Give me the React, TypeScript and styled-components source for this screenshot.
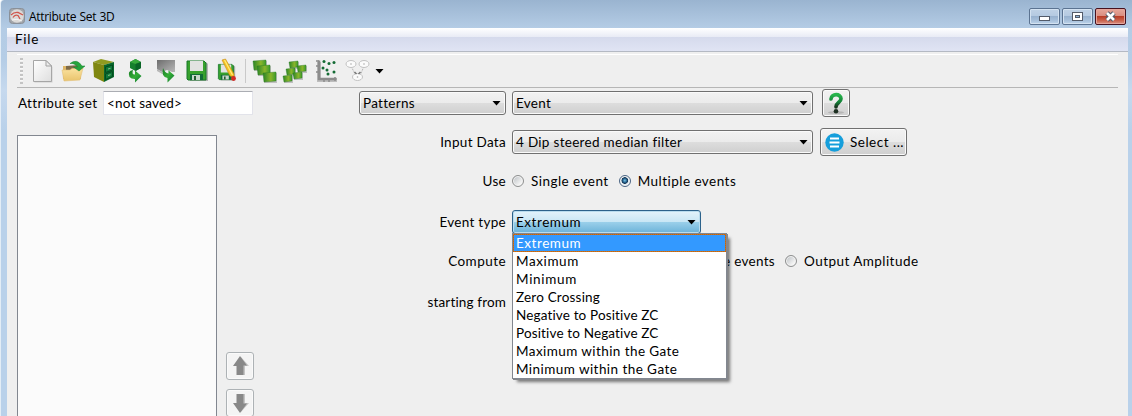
import React from "react";
import styled, { createGlobalStyle, css } from "styled-components";

const GlobalStyle = createGlobalStyle`
  * { box-sizing: border-box; }
  body { margin: 0; overflow: hidden; }
`;

const Window = styled.div`
  width: 1132px;
  height: 416px;
  display: flex;
  flex-direction: column;
  overflow: hidden;
  background: linear-gradient(#9ab4d0 0, #b4cce5 28px, #b5cde6 60px, #c6d9ee 90px, #b9d1ea 130px);
  border-left: 1px solid #e3edf6;
  border-top-left-radius: 4px;
  font-family: Lato, "Liberation Sans", sans-serif;
  font-size: 13.5px;
  color: #000;
`;

const TitleBar = styled.header`
  height: 28px;
  flex: none;
  display: flex;
  align-items: flex-start;
  padding: 8px 6px 0 8px;
`;

const Title = styled.h1`
  margin: 0 auto 0 4px;
  font: 400 12px/17px "Open Sans", "Noto Sans", sans-serif;
  letter-spacing: -0.3px;
  word-spacing: 0.5px;
`;

const Caption = styled.button<{ $close?: boolean }>`
  width: 31px;
  height: 17px;
  margin-left: 2px;
  padding: 0;
  display: flex;
  align-items: center;
  justify-content: center;
  border: 1px solid ${(p) => (p.$close ? "#47121f" : "#5b7391")};
  border-radius: 2px;
  box-shadow: inset 0 0 0 1px ${(p) => (p.$close ? "#e5a59b" : "#d3e2f1")};
  background: ${(p) =>
    p.$close
      ? "linear-gradient(#e6a79b 0, #da8e80 45%, #b93d27 50%, #c9604a 75%, #d99282 100%)"
      : "linear-gradient(#c0d2e6 0, #b5cae1 45%, #98b2cf 50%, #a6bfda 75%, #bfd5eb 100%)"};
`;

const Client = styled.main`
  flex: 1;
  width: 1121px;
  margin-left: 6px;
  background: #efefef;
`;

const MenuBar = styled.nav`
  height: 24px;
  padding: 0 0 0 8px;
  border-bottom: 1px solid #b4b9c3;
  background: linear-gradient(#fff 0, #e8ebf5 9px, #d5daec 9px, #e0e4f4 23px);
  line-height: 23px;
  letter-spacing: 0.75px;
`;

const ToolBar = styled.div`
  height: 34px;
  margin: 2px 10px 0;
  padding-left: 3px;
  display: flex;
  align-items: center;
  border-top: 1px solid #fff;
  border-bottom: 1px solid #b6b6b6;
`;

const Grip = styled.span`
  width: 3px;
  height: 26px;
  margin-right: 7px;
  background: repeating-linear-gradient(#c4c4c4 0 2px, #f8f8f8 2px 3px, #efefef 3px 4px);
`;

const Tool = styled.span<{ $width?: number }>`
  width: ${(p) => p.$width ?? 30.7}px;
  height: 26px;
  flex: none;
  svg { display: block; }
`;

const Separator = styled.span`
  width: 1px;
  height: 24px;
  margin: 0 3px 0 0;
  background: #c9c9c9;
`;

const Content = styled.div`
  display: flex;
  padding: 1px 10px 0;
  height: 328px;
`;

const SidePanel = styled.section`
  width: 342px;
  flex: none;
`;

const NameRow = styled.label`
  height: 28px;
  display: flex;
  align-items: center;
`;

const NameInput = styled.span`
  width: 150px;
  height: 24px;
  margin-left: auto;
  padding-left: 3px;
  border: 1px solid #e2e3ea;
  border-top-color: #abadb3;
  background: #fff;
  line-height: 22px;
  border-radius: 1px;
`;

const NameGroup = styled.span`
  width: 236px;
  padding-left: 1px;
  display: flex;
  align-items: center;
`;

const ListArea = styled.div`
  display: flex;
  margin-top: 18px;
`;

const ListBox = styled.div`
  width: 200px;
  height: 300px;
  border: 1px solid #828790;
  background: #fbfbfb;
`;

const MoveButtons = styled.div`
  margin: 217px 0 0 9px;
  display: flex;
  flex-direction: column;
  gap: 9px;
`;

const buttonFace = css`
  border: 1px solid #707070;
  border-radius: 3px;
  box-shadow: inset 0 0 0 1px #fafafa;
  background: linear-gradient(#f2f2f2 0, #ebebeb 50%, #dddddd 50%, #cfcfcf 100%);
`;

const PushButton = styled.button<{ $width?: number; $disabled?: boolean }>`
  ${buttonFace}
  width: ${(p) => p.$width ?? 28}px;
  height: 28px;
  padding: 0 0 0 4px;
  display: flex;
  align-items: center;
  gap: 6px;
  font: inherit;
  letter-spacing: 0.5px;
  white-space: nowrap;
  color: #000;
  ${(p) => p.$disabled && css`border-color: #adb2b5; background: #f4f4f4;`}
  svg { flex: none; }
`;

const Form = styled.section`
  display: flex;
  flex-direction: column;
`;

const Row = styled.div<{ $gap?: number }>`
  height: 28px;
  margin-bottom: ${(p) => p.$gap ?? 11}px;
  display: flex;
  align-items: center;
`;

const Label = styled.span<{ $spacing?: number }>`
  width: 147px;
  margin-right: 6px;
  text-align: right;
  letter-spacing: ${(p) => p.$spacing ?? 0.3}px;
`;

const Text = styled.span<{ $spacing?: number }>`
  white-space: nowrap;
  letter-spacing: ${(p) => p.$spacing ?? 0.3}px;
`;

const Combo = styled.div<{ $width: number; $open?: boolean; $after?: number }>`
  ${buttonFace}
  position: relative;
  width: ${(p) => p.$width}px;
  height: 24px;
  margin-right: ${(p) => p.$after ?? 0}px;
  padding: 0 4px 0 3px;
  display: flex;
  align-items: center;
  justify-content: space-between;
  ${(p) =>
    p.$open &&
    css`
      border-color: #2c628b;
      box-shadow: inset 0 0 0 1px #b9dcee;
      background: linear-gradient(#e3f3fb 0, #c8e6f5 50%, #9bd0ea 50%, #6bb2d9 100%);
    `}
`;

const Menu = styled.ul`
  position: absolute;
  z-index: 2;
  left: -1px;
  top: 22px;
  width: 215px;
  height: 146px;
  margin: 0;
  padding: 0;
  list-style: none;
  border: 1px solid #828790;
  background: #fff;
  box-shadow: 1px 1px 0 #85878c, 4px 4px 3px -1px rgba(0, 0, 0, 0.5);
`;

const Option = styled.li<{ $selected?: boolean }>`
  height: 18px;
  padding-left: 3px;
  line-height: 18px;
  ${(p) =>
    p.$selected &&
    css`
      padding-left: 2px;
      line-height: 16px;
      color: #fff;
      border: 1px solid transparent;
      background:
        linear-gradient(#3399ff, #3399ff) padding-box,
        repeating-conic-gradient(#cc6600 0 25%, #b5723a 0 50%) 0 0 / 2px 2px border-box;
    `}
`;

const Radio = styled.span<{ $checked?: boolean }>`
  width: 12px;
  height: 12px;
  margin-right: 7px;
  flex: none;
  border-radius: 50%;
  border: 1px solid ${(p) => (p.$checked ? "#4b6584" : "#8e8f8f")};
  box-shadow: inset 0 0 0 1px #f4f4f4;
  background: ${(p) =>
    p.$checked
      ? "radial-gradient(circle at 48% 45%, #77c5e8 0, #174d78 2.4px, #17334f 3px, #d8e4eb 3.6px, #f3f6f8 5px)"
      : "linear-gradient(135deg, #b9bec2, #f4f4f4 75%)"};
`;

const Choice = styled.label<{ $after?: number; $width?: number }>`
  display: flex;
  align-items: center;
  justify-content: flex-end;
  width: ${(p) => (p.$width ? `${p.$width}px` : "auto")};
  margin-right: ${(p) => p.$after ?? 0}px;
`;

const DropArrow = () => (
  <svg width="9" height="5" viewBox="0 0 9 5"><path d="M0.5 0H8.5L4.5 4.5Z" fill="#000" /></svg>
);

const Gradients = () => (
  <svg width="0" height="0" display="block">
    <defs>
      <linearGradient id="leaf" x1="0" y1="0" x2="1" y2="1"><stop stopColor="#187c25" /><stop offset=".5" stopColor="#35ad36" /><stop offset="1" stopColor="#0d7533" /></linearGradient>
      <linearGradient id="tile" x1="0" y1="0" x2="1" y2="0"><stop stopColor="#2a8526" /><stop offset=".6" stopColor="#8ab52a" /><stop offset="1" stopColor="#3c9a2b" /></linearGradient>
      <linearGradient id="grey" x1="0" y1="0" x2="1" y2="1"><stop stopColor="#6d6d6d" /><stop offset="1" stopColor="#b8b8b8" /></linearGradient>
      <linearGradient id="paper" x1="0" y1="0" x2="1" y2="1"><stop stopColor="#fff" /><stop offset="1" stopColor="#dedede" /></linearGradient>
      <linearGradient id="folder" x1="0" y1="0" x2="0" y2="1"><stop stopColor="#fbe3a0" /><stop offset="1" stopColor="#e9c36c" /></linearGradient>
      <linearGradient id="help" x1="0" y1="0" x2="0" y2="1"><stop stopColor="#27b44b" /><stop offset=".6" stopColor="#128238" /><stop offset="1" stopColor="#17351f" /></linearGradient>
    </defs>
  </svg>
);

const Icon = ({ children, width = 26 }: { children: React.ReactNode; width?: number }) => (
  <svg width={width} height="26" viewBox={`0 0 ${width} 26`}>{children}</svg>
);

const AppLogo = () => (
  <svg width="16" height="16" viewBox="0 0 16 16">
    <rect x=".5" y=".5" width="15" height="15" rx="3" fill="#a3a6aa" stroke="#8a9098" />
    <circle cx="8" cy="8" r="6.800" fill="#dcdad8" />
    <path d="M2 7Q5 4 9 4.500L14 7M4 9.500Q6 6 9 7.500L11 11" fill="none" stroke="#d0564c" strokeWidth="1.300" />
    <path d="M3 12Q8 10 13 13" stroke="#f4f4f4" fill="none" />
  </svg>
);

const NewIcon = () => (
  <Icon>
    <path d="M4.500 3.500H17L22.500 9V24.500H4.500Z" fill="#aaa" opacity=".45" />
    <path d="M3.500 2.500H16L21.500 8V23.500H3.500Z" fill="url(#paper)" stroke="#a6a6a6" />
    <path d="M16 2.500V8H21.500Z" fill="#ececec" stroke="#a1a1a1" />
  </Icon>
);
const OpenIcon = () => (
  <Icon>
    <path d="M2 8H8L10 10H20V21H2Z" fill="#dcb566" />
    <path d="M5 8L18 7V13H5Z" fill="#7d6a48" />
    <path d="M1 12H9L11 10.500L22 10L19 22L3 23Z" fill="url(#folder)" stroke="#e3c17a" strokeWidth=".6" />
    <path d="M9 5.500Q16 0 21 8H24L18 13L12.500 9H16.500Q14 5 9 5.500Z" fill="#26a43d" stroke="#16812c" strokeWidth=".5" />
  </Icon>
);
const CabinetIcon = () => (
  <Icon>
    <path d="M2 4L10 1L23 4L13 7Z" fill="#909b20" />
    <path d="M2 4L13 7V24L3 19Z" fill="#7f8710" />
    <path d="M13 7L23 4V19L13 24Z" fill="#08672c" />
    <path d="M14.500 9L21.500 7V12L14.500 14.500ZM14.500 16L21.500 13.500V18.500L14.500 21.500Z" fill="#0d7939" stroke="#044b1f" />
    <path d="M17 11L19.500 10.300M17 17.500L19.500 16.700" stroke="#8fbd88" />
  </Icon>
);
const ImportCubeIcon = () => (
  <Icon>
    <path d="M8 4L13.500 1L19 4V10L13.500 13L8 10Z" fill="#16802d" />
    <path d="M8 4L13.500 6L19 4L13.500 1Z" fill="#37a83b" />
    <path d="M13.500 6V13L19 10V4Z" fill="#0a6426" />
    <path d="M11 12Q5 13 7.500 19Q9 21 13 21V24.500L19.500 18L13 12.500V16.500Q9.500 17 11 12Z" fill="url(#leaf)" />
  </Icon>
);
const ImportHorizonIcon = () => (
  <Icon>
    <path d="M4 2H22V14H19L14 12L9 14L4 11Z" fill="url(#grey)" />
    <path d="M4 11L9 14L11 17L4 13Z" fill="#b6b6b6" />
    <path d="M10 10Q8 19 14.500 20V24.500L21.500 17.500L15.500 12.500V15.500Q12 15 10 10Z" fill="url(#leaf)" />
  </Icon>
);
const Disk = () => (
  <>
    <path d="M4 4H22L24 6V23H6Z" fill="#777" opacity=".5" />
    <path d="M3 3H20L22 5V22H4L3 21Z" fill="#37a12d" stroke="#18782b" />
    <path d="M6 3H19V13H6Z" fill="#e1e3e1" />
    <path d="M6 16H19V22H6Z" fill="#116b37" />
    <path d="M8 17H16V22H8Z" fill="#c7d6cb" />
    <path d="M10 18H12V22H10Z" fill="#245b32" />
  </>
);
const SaveIcon = () => <Icon><g transform="translate(1 0)"><Disk /></g></Icon>;
const SaveAsIcon = () => (
  <Icon>
    <g transform="translate(2 4) scale(.8)"><Disk /></g>
    <path d="M8 2L11.500 1L20 16V19L16 18Z" fill="#f4c225" stroke="#c78810" strokeWidth=".6" />
    <path d="M10.500 2L18.500 17" stroke="#ffed79" strokeWidth="1.200" />
    <circle cx="19.500" cy="20.500" r="2.400" fill="#d52b27" />
  </Icon>
);
const TileIcon = ({ spots, size }: { spots: number[][]; size: number[] }) => (
  <Icon width={28}>
    {spots.map(([x, y], i) => (
      <g key={i}>
        <rect x={x + 1} y={y + 1} width={size[0]} height={size[1]} fill="#888" opacity=".45" />
        <path d={`M${x} ${y + 1}L${x + size[0]} ${y}V${y + size[1] - 1}L${x + 1} ${y + size[1]}Z`} fill="url(#tile)" stroke="#28781f" strokeWidth=".4" />
      </g>
    ))}
  </Icon>
);
const CrossPlotIcon = () => (
  <Icon>
    <path d="M5 4V22H23" fill="none" stroke="#bdbdbd" strokeWidth="4" />
    <path d="M5 2.500V21H22.500" fill="none" stroke="#8c8c8c" strokeWidth="2.500" />
    <path d="M2 3H5M2 8H4M2 14H4M10 22V24M15 22V24M21 19V23" fill="none" stroke="#8c8c8c" strokeWidth="1.500" />
    {[[10, 3.500], [15, 5.500], [20, 4.500], [9, 10], [13, 12], [14, 16], [20, 14]].map(([x, y]) => (
      <circle key={`${x}-${y}`} cx={x} cy={y} r="1.500" fill="#146b34" />
    ))}
  </Icon>
);
const NetworkIcon = () => (
  <Icon>
    <path d="M6 8L11 18M19 8L15 18" stroke="#b5b5b5" strokeDasharray="2 1" />
    {[[6, 6], [19, 6], [12.5, 19]].map(([x, y]) => (
      <g key={x}>
        <ellipse cx={x} cy={y} rx="5" ry="3.500" fill="#fbfbfb" stroke="#c2c2c2" />
        <circle cx={x} cy={y} r=".8" fill="#aaa" />
      </g>
    ))}
    <path d="M9.500 14L11.500 16M15.500 14L13.500 16" stroke="#777" strokeWidth="1.500" />
  </Icon>
);
const HelpIcon = () => (
  <svg width="20" height="24" viewBox="0 0 20 24">
    <ellipse cx="9" cy="21.500" rx="8" ry="1.300" fill="#b5b5b5" />
    <path d="M4 8C4.300 2.300 14 2.300 14 7.700C14 11.300 9 11.800 9 15.800" fill="none" stroke="url(#help)" strokeWidth="3.700" strokeLinecap="round" />
    <circle cx="9" cy="20.300" r="2.300" fill="#1e3022" />
  </svg>
);
const SelectIcon = () => (
  <svg width="19" height="19" viewBox="0 0 19 19">
    <circle cx="9.500" cy="9.500" r="9.200" fill="#159edb" />
    <path d="M5 5.500H14M4.500 9.500H14.500M5 13.500H14" stroke="#fff" strokeWidth="2" />
  </svg>
);
const MoveIcon = ({ down }: { down?: boolean }) => (
  <svg width="18" height="20" viewBox="0 0 18 20">
    <g transform={down ? "matrix(1 0 0 -1 0 20)" : undefined}>
      <path d="M10 1L18 10H14V19H7V10H4Z" fill="#c4c4c4" />
      <path d="M9 0L16 9.500H12.500V19H5.500V10H2Z" fill="#888" />
    </g>
  </svg>
);

const options: [string, number][] = [
  ["Extremum", 0.55],
  ["Maximum", 0.6],
  ["Minimum", 0.7],
  ["Zero Crossing", 0.2],
  ["Negative to Positive ZC", 0.15],
  ["Positive to Negative ZC", 0.15],
  ["Maximum within the Gate", 0.42],
  ["Minimum within the Gate", 0.44],
];

export default function App() {
  return (
    <Window>
      <GlobalStyle />
      <TitleBar>
        <AppLogo />
        <Title>Attribute Set 3D</Title>
        <Caption aria-label="Minimize">
          <svg width="11" height="11"><rect x=".5" y="5.500" width="10" height="4" fill="#fff" stroke="#535b69" /></svg>
        </Caption>
        <Caption aria-label="Maximize">
          <svg width="11" height="9"><rect x=".5" y=".5" width="10" height="8" fill="#fff" stroke="#535b69" /><rect x="3.500" y="3.500" width="4" height="2" fill="#8eb3d8" stroke="#535b69" /></svg>
        </Caption>
        <Caption $close aria-label="Close">
          <svg width="13" height="11"><path d="M3 2L10 9M10 2L3 9" stroke="#535b69" strokeWidth="4.600" /><path d="M3 2L10 9M10 2L3 9" stroke="#fff" strokeWidth="2.600" /></svg>
        </Caption>
      </TitleBar>
      <Client>
        <MenuBar>File</MenuBar>
        <ToolBar>
          <Gradients />
          <Grip />
          <Tool><NewIcon /></Tool>
          <Tool><OpenIcon /></Tool>
          <Tool><CabinetIcon /></Tool>
          <Tool><ImportCubeIcon /></Tool>
          <Tool><ImportHorizonIcon /></Tool>
          <Tool><SaveIcon /></Tool>
          <Tool><SaveAsIcon /></Tool>
          <Separator />
          <Tool $width={32}><TileIcon spots={[[4, 2], [8, 7], [14, 14]]} size={[13, 10]} /></Tool>
          <Tool $width={33}><TileIcon spots={[[8, 3], [16, 7], [5, 10], [12, 14], [2, 17]]} size={[9, 7]} /></Tool>
          <Tool $width={31}><CrossPlotIcon /></Tool>
          <Tool $width={30}><NetworkIcon /></Tool>
          <DropArrow />
        </ToolBar>
        <Content>
          <SidePanel>
            <NameRow>
              <NameGroup>
                <Text $spacing={0.35}>Attribute set</Text>
                <NameInput><Text $spacing={0.2}>&lt;not saved&gt;</Text></NameInput>
              </NameGroup>
            </NameRow>
            <ListArea>
              <ListBox />
              <MoveButtons>
                <PushButton $disabled aria-label="Move up"><MoveIcon /></PushButton>
                <PushButton $disabled aria-label="Move down"><MoveIcon down /></PushButton>
              </MoveButtons>
            </ListArea>
          </SidePanel>
          <Form>
            <Row>
              <Combo $width={147} $after={6}><Text>Patterns</Text><DropArrow /></Combo>
              <Combo $width={301} $after={9}><Text>Event</Text><DropArrow /></Combo>
              <PushButton aria-label="Help"><HelpIcon /></PushButton>
            </Row>
            <Row>
              <Label>Input Data</Label>
              <Combo $width={301} $after={7}><Text>4 Dip steered median filter</Text><DropArrow /></Combo>
              <PushButton $width={87}><SelectIcon />Select ...</PushButton>
            </Row>
            <Row $gap={13}>
              <Label>Use</Label>
              <Choice $after={10}><Radio /><Text $spacing={0.47}>Single event</Text></Choice>
              <Choice><Radio $checked /><Text $spacing={0.47}>Multiple events</Text></Choice>
            </Row>
            <Row>
              <Label>Event type</Label>
              <Combo $width={189} $open>
                <Text $spacing={0.55}>Extremum</Text>
                <DropArrow />
                <Menu>
                  {options.map(([name, spacing], i) => (
                    <Option key={name} $selected={i === 0}><Text $spacing={spacing}>{name}</Text></Option>
                  ))}
                </Menu>
              </Combo>
            </Row>
            <Row $gap={13}>
              <Label $spacing={0.45}>Compute</Label>
              <Choice $width={263} $after={10}><Text>e events</Text></Choice>
              <Choice><Radio /><Text $spacing={0.45}>Output Amplitude</Text></Choice>
            </Row>
            <Row><Label $spacing={0.15}>starting from</Label></Row>
          </Form>
        </Content>
      </Client>
    </Window>
  );
}
